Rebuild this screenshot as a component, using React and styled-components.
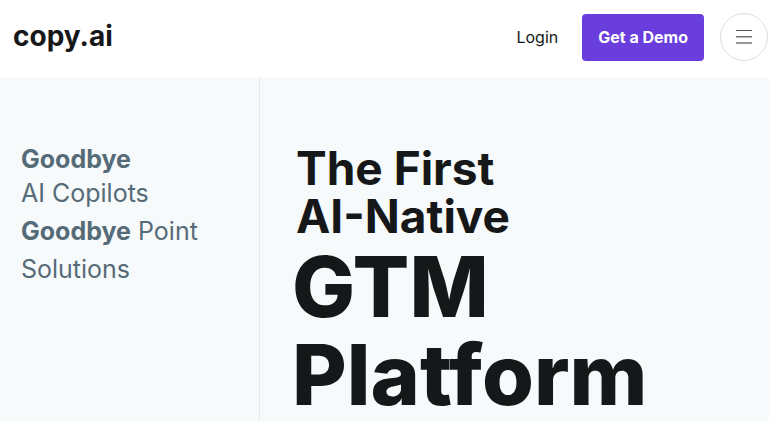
import React from "react";
import styled, { createGlobalStyle } from "styled-components";

const App = () => {
  return (
    <>
      <GlobalStyle />
      <Header>
        <Logo href="#" aria-label="copy.ai home">
          copy.ai
        </Logo>
        <Nav>
          <LoginLink href="#login">Login</LoginLink>
          <DemoButton type="button">Get a Demo</DemoButton>
          <MenuButton type="button" aria-label="Open menu">
            <svg width="16" height="14" viewBox="0 0 16 14">
              <rect width="16" height="1" y="0" fill="#555" />
              <rect width="16" height="1" y="6" fill="#707070" />
              <rect width="16" height="1" y="7" fill="#bbb" />
              <rect width="16" height="2" y="12" fill="#999" />
            </svg>
          </MenuButton>
        </Nav>
      </Header>
      <Hero>
        <Aside>
          <Line>
            <strong>Goodbye</strong>
          </Line>
          <Line>AI Copilots</Line>
          <Line $tall>
            <strong>Goodbye</strong> Point
            <br />
            Solutions
          </Line>
        </Aside>
        <Title>
          <Intro>
            The First
            <br />
            AI-Native
          </Intro>
          <Big>
            GTM
            <br />
            Platform
          </Big>
        </Title>
      </Hero>
    </>
  );
};

const GlobalStyle = createGlobalStyle`
  * {
    box-sizing: border-box;
  }
  body {
    margin: 0;
    background-color: #f6fafb;
    color: #161718;
    font-family: Inter, "Liberation Sans", sans-serif;
  }
`;

const Header = styled.header`
  display: flex;
  align-items: center;
  justify-content: space-between;
  height: 77px;
  padding: 0 1px 3px 13px;
  background-color: #fff;
`;

const Logo = styled.a`
  padding-bottom: 3px;
  color: #161718;
  font-size: 28px;
  line-height: 32px;
  font-weight: 700;
  text-decoration: none;
`;

const Nav = styled.nav`
  display: flex;
  align-items: center;
`;

const LoginLink = styled.a`
  margin-right: 24px;
  color: #161718;
  font-size: 16px;
  line-height: 24px;
  text-decoration: none;
`;

const DemoButton = styled.button`
  height: 47px;
  margin-right: 16px;
  padding: 0 16px;
  border: 0;
  border-radius: 4px;
  background-color: #693edc;
  color: #fff;
  font-family: inherit;
  font-size: 16px;
  font-weight: 700;
  cursor: pointer;
`;

const MenuButton = styled.button`
  display: flex;
  align-items: center;
  justify-content: center;
  width: 48px;
  height: 48px;
  padding: 0;
  border: 1px solid #dedede;
  border-radius: 50%;
  background-color: #fff;
  cursor: pointer;
`;

const Hero = styled.main`
  display: grid;
  grid-template-columns: 260px 1fr;
  min-height: calc(100vh - 77px);
`;

const Aside = styled.aside`
  padding: 65px 21px 0;
  border-right: 1px solid #e3e8ea;
  color: #566b78;
`;

const Line = styled.p`
  margin: ${(props) => (props.$tall ? "2px 0 0" : "0")};
  font-size: 25px;
  line-height: ${(props) => (props.$tall ? "38px" : "34px")};

  strong {
    font-weight: 700;
  }
`;

const Title = styled.h1`
  margin: 0;
  padding: 67px 16px 0 32px;
  font-weight: 700;
`;

const Intro = styled.span`
  display: block;
  padding-left: 4px;
  font-size: 46px;
  line-height: 48px;
`;

const Big = styled.span`
  display: block;
  margin-top: 3px;
  font-size: 84px;
  font-weight: 800;
  line-height: 88px;
`;

export default App;
